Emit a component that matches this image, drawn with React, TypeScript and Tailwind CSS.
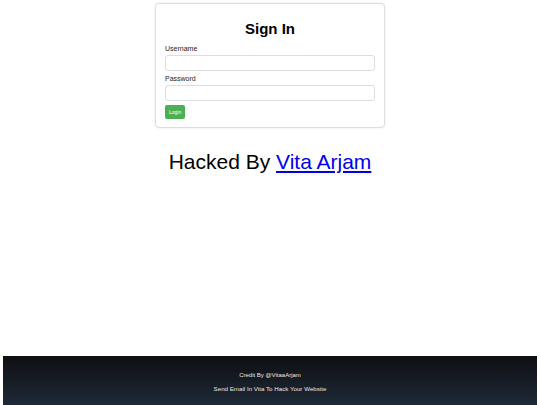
export default function App() {
  return (
    <div className="flex h-[405px] w-[540px] flex-col bg-white font-['Liberation_Sans',Arial,sans-serif]">
      {/* Login card */}
      <div className="mx-auto mt-[3px] w-[230px] rounded-[4px] border border-[#dddddd] bg-white px-[9px] pb-[8px] pt-[15px] shadow-[0_0_3px_rgba(0,0,0,0.08)]">
        <h2 className="text-center text-[15px] font-bold leading-[20px] text-black">Sign In</h2>
        <div className="mt-[5px]">
          <label className="block text-[7px] leading-[9px] text-[#222]">Username</label>
          <input
            type="text"
            className="mt-[2px] block h-[16px] w-full rounded-[3px] border border-[#dddddd] bg-white outline-none"
          />
        </div>
        <div className="mt-[3px]">
          <label className="block text-[7px] leading-[9px] text-[#222]">Password</label>
          <input
            type="password"
            className="mt-[2px] block h-[16px] w-full rounded-[3px] border border-[#dddddd] bg-white outline-none"
          />
        </div>
        <button className="mt-[4px] block h-[14px] rounded-[2px] bg-[#4caf50] px-[4px] text-[5px] leading-[14px] text-white">
          Login
        </button>
      </div>

      {/* Message */}
      <p className="mt-[21px] text-center text-[21px] leading-[26px] text-black">
        Hacked By{" "}
        <a href="#" className="text-[#0000ee] underline">
          Vita Arjam
        </a>
      </p>

      {/* Footer */}
      <footer className="mx-[3px] mt-auto flex h-[49px] flex-col items-center justify-center gap-[6px] bg-gradient-to-b from-[#0e0f12] to-[#1e2a38] pt-[3px]">
        <p className="text-[6px] leading-[7px] text-[#e6e6e6]">Credit By @VitaaArjam</p>
        <p className="text-[6.2px] leading-[7px] text-[#e6e6e6]">Send Email In Vita To Hack Your Website</p>
      </footer>
    </div>
  );
}
